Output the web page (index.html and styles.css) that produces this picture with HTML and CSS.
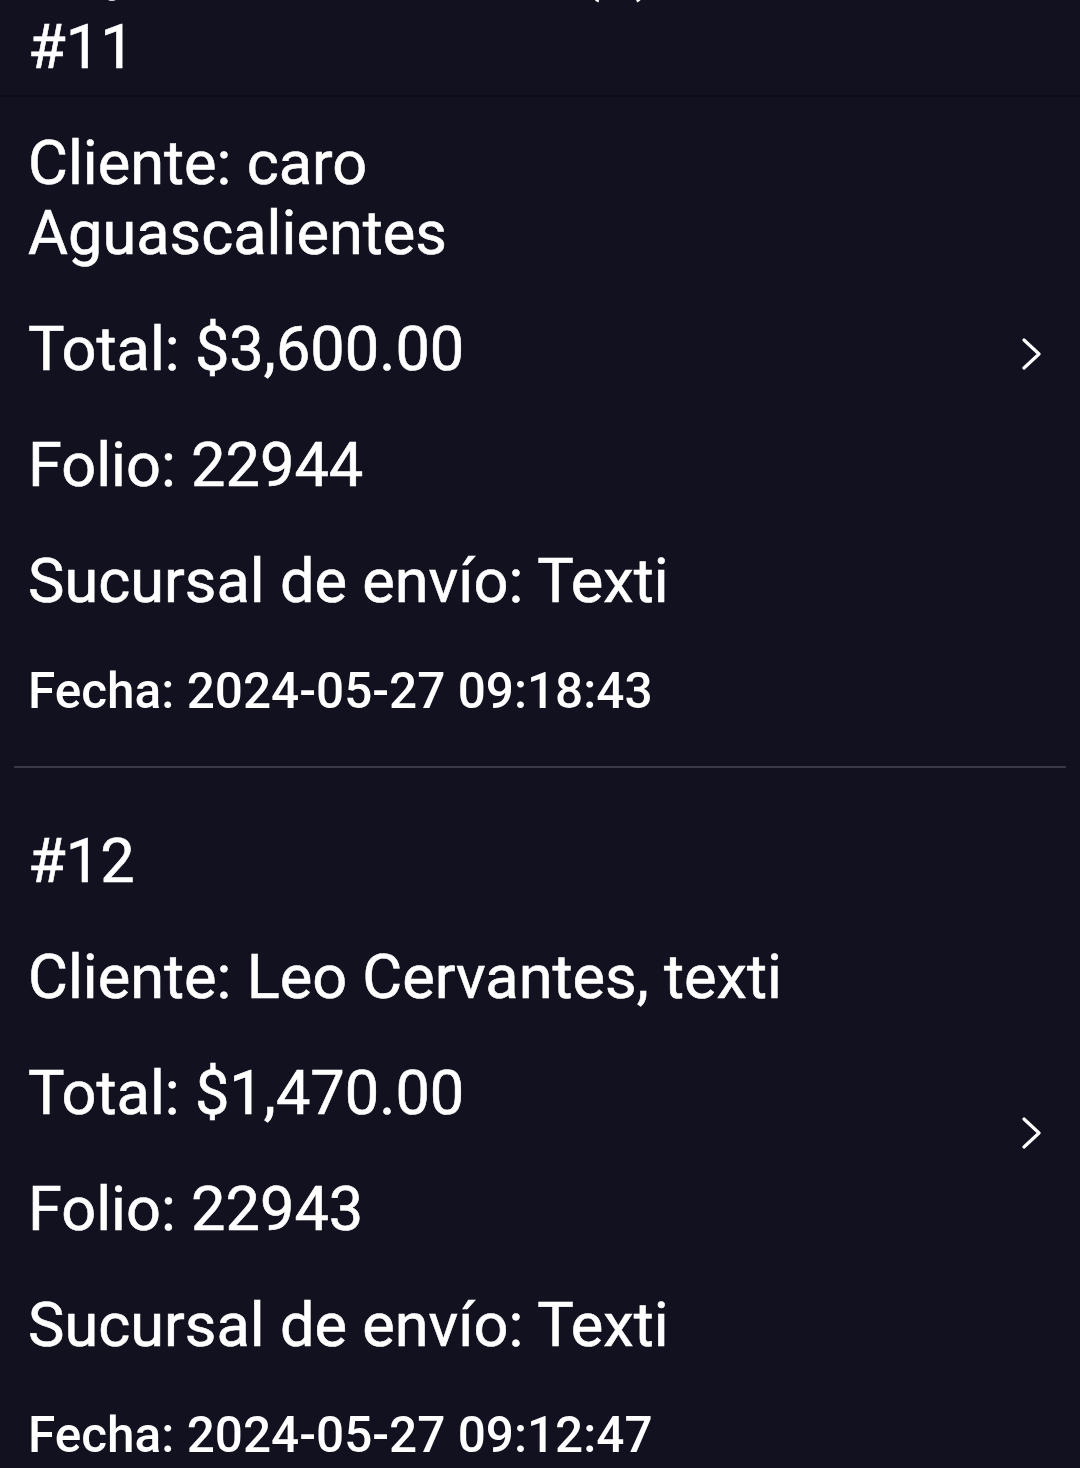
FILE: index.html
```html
<!DOCTYPE html>
<html lang="es">
<head>
    <meta charset="UTF-8">
    <meta name="viewport" content="width=device-width, initial-scale=1.0">
    <title>Pedidos</title>
    <link rel="stylesheet" href="styles.css">
</head>
<body>
    <div class="day-head">
        <h2 class="day-title">Hoy Total de ventas (2)</h2>
    </div>

    <ul class="orders">
        <li class="order">
            <div class="order-info">
                <p class="order-num">#11</p>
                <p class="order-line">Cliente: caro<br>Aguascalientes</p>
                <p class="order-line">Total: $3,600.00</p>
                <p class="order-line">Folio: 22944</p>
                <p class="order-line">Sucursal de envío: Texti</p>
                <p class="order-date">Fecha: 2024-05-27 09:18:43</p>
            </div>
            <svg class="chevron" viewBox="0 0 24 32" width="24" height="32">
                <path d="M4 2 L19 16 L4 30" fill="none" stroke="#fff" stroke-width="3.2" stroke-linecap="round" stroke-linejoin="round"/>
            </svg>
        </li>
        <li class="order">
            <div class="order-info">
                <p class="order-num">#12</p>
                <p class="order-line">Cliente: Leo Cervantes, texti</p>
                <p class="order-line">Total: $1,470.00</p>
                <p class="order-line">Folio: 22943</p>
                <p class="order-line">Sucursal de envío: Texti</p>
                <p class="order-date">Fecha: 2024-05-27 09:12:47</p>
            </div>
            <svg class="chevron" viewBox="0 0 24 32" width="24" height="32">
                <path d="M4 2 L19 16 L4 30" fill="none" stroke="#fff" stroke-width="3.2" stroke-linecap="round" stroke-linejoin="round"/>
            </svg>
        </li>
    </ul>
</body>
</html>
```

FILE: styles.css
```css
* {
    margin: 0;
    padding: 0;
    box-sizing: border-box;
}
body {
    background-color: #11111f;
    color: #fff;
    font-family: Roboto, "Noto Sans", sans-serif;
    display: flex;
    flex-direction: column;
    position: relative;
    overflow: hidden;
}
/* shadow under the header that scrolls off */
body::after {
    content: "";
    position: absolute;
    top: 95px;
    left: 0;
    right: 0;
    height: 2px;
    background-color: #0c0c18;
}
.day-head {
    height: 0;
}
.day-title {
    font-size: 61.3px;
    font-weight: 400;
    line-height: 70px;
    padding-left: 28px;
    margin-top: -68px;
    white-space: nowrap;
    -webkit-text-stroke: 0.6px #fff;
}
.orders {
    list-style-type: none;
    margin-top: -46px;
}
.order {
    display: flex;
    align-items: center;
    margin: 0 14px;
    padding: 58px 22px 46px 14px;
    border-bottom: 2px solid #393947;
}
.order-info {
    flex: 1;
    display: flex;
    flex-direction: column;
    gap: 46px;
}
.order-num,
.order-line {
    font-size: 61.3px;
    line-height: 70px;
    font-weight: 400;
    -webkit-text-stroke: 0.6px #fff;
}
.order-date {
    font-size: 49.5px;
    line-height: 58px;
    font-weight: 500;
}
.chevron {
    margin-bottom: 24px;
}
```
